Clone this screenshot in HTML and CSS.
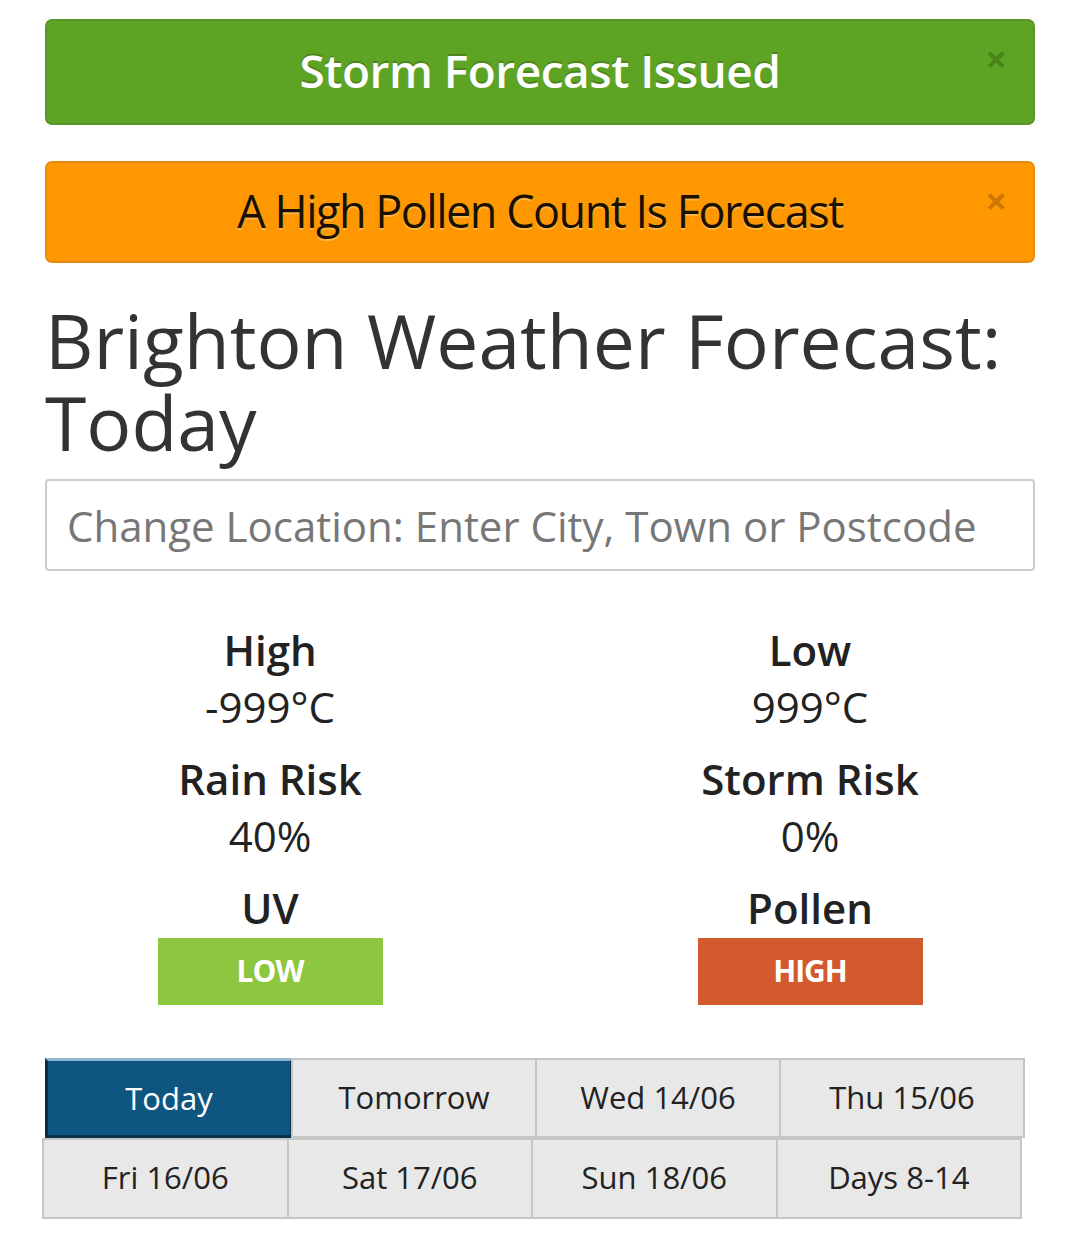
FILE: index.html
```html
<!DOCTYPE html>
<html>
<head>
<meta charset="UTF-8">
<meta name="viewport" content="width=device-width,user-scalable=no">
<title>Brighton Weather Forecast</title>
<link rel="stylesheet" href="styles.css">
</head>
<body>

<div class="wrap">
    <div class="alert alert-green">
        <span>Storm Forecast Issued</span>
        <a class="close" href="#">&times;</a>
    </div>
    <div class="alert alert-orange">
        <span>A High Pollen Count Is Forecast</span>
        <a class="close" href="#">&times;</a>
    </div>

    <h1>Brighton Weather Forecast: Today</h1>

    <input class="search" type="text" placeholder="Change Location: Enter City, Town or Postcode">

    <div class="stats">
        <div class="stat">
            <h3>High</h3>
            <p>-999°C</p>
        </div>
        <div class="stat">
            <h3>Low</h3>
            <p>999°C</p>
        </div>
        <div class="stat">
            <h3>Rain Risk</h3>
            <p>40%</p>
        </div>
        <div class="stat">
            <h3>Storm Risk</h3>
            <p>0%</p>
        </div>
        <div class="stat">
            <h3>UV</h3>
            <span class="level level-low">LOW</span>
        </div>
        <div class="stat">
            <h3>Pollen</h3>
            <span class="level level-high">HIGH</span>
        </div>
    </div>

    <ul class="days">
        <li class="on">Today</li>
        <li>Tomorrow</li>
        <li>Wed 14/06</li>
        <li>Thu 15/06</li>
    </ul>
    <ul class="days days-2">
        <li>Fri 16/06</li>
        <li>Sat 17/06</li>
        <li>Sun 18/06</li>
        <li>Days 8-14</li>
    </ul>
</div>

</body>
</html>
```

FILE: styles.css
```css
* {
    margin: 0;
    padding: 0;
    box-sizing: border-box;
}

html {
    background: #fff;
}

body {
    font-family: "Open Sans", "Noto Sans", sans-serif;
    color: #333;
    overflow-x: hidden;
}

.wrap {
    width: 990px;
    margin-left: 45px;
    padding-top: 19px;
}

.alert {
    position: relative;
    display: flex;
    align-items: center;
    justify-content: center;
    margin-bottom: 36px;
    padding-bottom: 4px;
    height: 106px;
    border: 2px solid;
    border-radius: 7px;
    font-size: 46px;
    font-weight: 600;
    letter-spacing: -0.5px;
}

.alert-green {
    background: #5ea424;
    border-color: #57962a;
    color: #fff;
    text-shadow: 0 -2px 0 rgba(0, 0, 0, 0.2);
}

.alert-orange {
    height: 102px;
    background: #fe9700;
    border-color: #e68a10;
    color: #1a1000;
    font-weight: 400;
    font-size: 45px;
    letter-spacing: -1.5px;
    text-shadow: 0 2px 0 rgba(255, 255, 255, 0.3);
}

.alert .close {
    position: absolute;
    top: 18px;
    right: 26px;
    font-size: 38px;
    font-weight: 700;
    line-height: 1;
    color: #000;
    opacity: 0.2;
    text-decoration: none;
    text-shadow: none;
    letter-spacing: 0;
}

h1 {
    margin-top: 36px;
    font-size: 75px;
    line-height: 82px;
    font-weight: 400;
    color: #333;
}

.search {
    display: block;
    width: 100%;
    height: 92px;
    margin-top: 16px;
    padding: 0 20px;
    border: 2px solid #ccc;
    border-radius: 4px;
    font-family: inherit;
    font-size: 42px;
    color: #555;
    outline: none;
}

.search::placeholder {
    color: #777;
}

.stats {
    display: grid;
    grid-template-columns: 540px 540px;
    margin-left: -45px;
    width: 1080px;
    padding-top: 50px;
    row-gap: 15px;
}

.stat {
    text-align: center;
    color: #222;
}

.stat h3 {
    font-size: 42px;
    font-weight: 600;
    line-height: 57px;
}

.stat p {
    font-size: 42px;
    line-height: 57px;
}

.level {
    display: block;
    margin: 2px auto 0;
    width: 225px;
    height: 67px;
    line-height: 65px;
    font-size: 30px;
    font-weight: 700;
    color: #fff;
    letter-spacing: -1px;
}

.level-low {
    background: #8dc63f;
}

.level-high {
    background: #d35a2f;
}

.days {
    display: flex;
    list-style: none;
    width: 980px;
    margin-top: 53px;
}

.days li {
    flex: 1;
    height: 80px;
    line-height: 74px;
    text-align: center;
    font-size: 31px;
    font-weight: 500;
    color: #222;
    background: #e8e8e8;
    border: 2px solid #c6c6c6;
    margin-left: -2px;
}

.days li:first-child {
    margin-left: 0;
}

.days li.on {
    background: #0e5580;
    border: 3px solid #0a2f48;
    border-top-color: #8fb6cf;
    color: #fff;
}

.days-2 {
    margin-top: 0;
    margin-left: -3px;
}

.days-2 li {
    height: 81px;
}
```
